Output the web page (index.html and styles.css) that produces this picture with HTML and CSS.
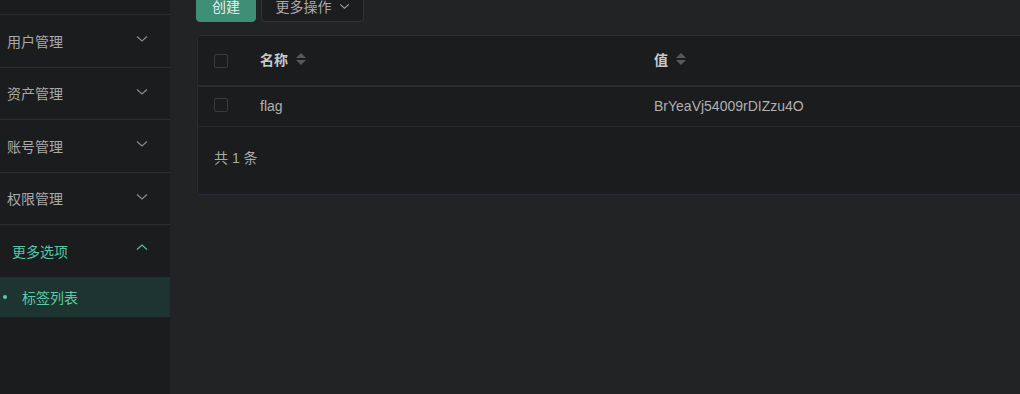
FILE: index.html
```html
<!DOCTYPE html>
<html lang="zh-CN">
<head>
<meta charset="utf-8">
<title>标签列表</title>
<link rel="stylesheet" href="styles.css">
</head>
<body>
<div class="layout">
  <aside class="sider">
    <div class="menu-top"></div>
    <div class="menu-item">
      <span>用户管理</span>
      <svg class="chev" viewBox="0 0 12 8" width="12" height="8"><path d="M1 1.5 L6 6 L11 1.5" fill="none" stroke="currentColor" stroke-width="1.2"/></svg>
    </div>
    <div class="menu-item">
      <span>资产管理</span>
      <svg class="chev" viewBox="0 0 12 8" width="12" height="8"><path d="M1 1.5 L6 6 L11 1.5" fill="none" stroke="currentColor" stroke-width="1.2"/></svg>
    </div>
    <div class="menu-item">
      <span>账号管理</span>
      <svg class="chev" viewBox="0 0 12 8" width="12" height="8"><path d="M1 1.5 L6 6 L11 1.5" fill="none" stroke="currentColor" stroke-width="1.2"/></svg>
    </div>
    <div class="menu-item">
      <span>权限管理</span>
      <svg class="chev" viewBox="0 0 12 8" width="12" height="8"><path d="M1 1.5 L6 6 L11 1.5" fill="none" stroke="currentColor" stroke-width="1.2"/></svg>
    </div>
    <div class="menu-item open">
      <span class="open-title">更多选项</span>
      <svg class="chev up" viewBox="0 0 12 8" width="12" height="8"><path d="M1 6.5 L6 2 L11 6.5" fill="none" stroke="currentColor" stroke-width="1.2"/></svg>
    </div>
    <div class="sub-item active">
      <span class="dot"></span>
      <span>标签列表</span>
    </div>
  </aside>
  <main class="content">
    <div class="toolbar">
      <button class="btn btn-primary">创建</button>
      <button class="btn btn-default">更多操作
        <svg class="btn-chev" viewBox="0 0 12 8" width="11" height="7"><path d="M1 1.5 L6 6 L11 1.5" fill="none" stroke="currentColor" stroke-width="1.2"/></svg>
      </button>
    </div>
    <div class="card">
      <div class="row head">
        <div class="cell cb"><span class="checkbox"></span></div>
        <div class="cell th">名称
          <span class="sorter"><i class="tri-up"></i><i class="tri-down"></i></span>
        </div>
        <div class="cell th">值
          <span class="sorter"><i class="tri-up"></i><i class="tri-down"></i></span>
        </div>
      </div>
      <div class="row body">
        <div class="cell cb"><span class="checkbox"></span></div>
        <div class="cell td">flag</div>
        <div class="cell td">BrYeaVj54009rDIZzu4O</div>
      </div>
      <div class="footer">共 1 条</div>
    </div>
  </main>
</div>
</body>
</html>
```
FILE: styles.css
```css
* { box-sizing: border-box; }
html, body {
  margin: 0;
  padding: 0;
  height: 100%;
  overflow: hidden;
  background: #222325;
  font-family: "Liberation Sans", Arial, "Noto Sans CJK SC", sans-serif;
  font-size: 14px;
}
.layout {
  display: flex;
  height: 394px;
}
.sider {
  width: 170px;
  flex: none;
  background: #1b1c1e;
  display: flex;
  flex-direction: column;
}
.menu-top {
  height: 15px;
  border-bottom: 1px solid #2c2d30;
  flex: none;
}
.menu-item {
  height: 52.5px;
  flex: none;
  display: flex;
  align-items: center;
  justify-content: space-between;
  padding: 0 22px 0 7px;
  color: #a9a9a9;
  border-bottom: 1px solid #2c2d30;
}
.menu-item span { line-height: 20px; padding-top: 2px; }
.chev { color: #8a8a8a; margin-top: -3px; }
.menu-item.open { border-bottom: none; }
.open-title { color: #54c8a2; padding-left: 5px; }
.chev.up { color: #4fc4a0; margin-top: -8px; }
.sub-item {
  height: 40px;
  flex: none;
  display: flex;
  align-items: center;
  background: #1d3430;
  color: #5ccaa4;
  padding-left: 3px;
  margin-top: -1px;
}
.dot {
  width: 4px;
  height: 4px;
  border-radius: 50%;
  background: #5ccaa4;
  margin-right: 15px;
}
.content {
  flex: 1;
  min-width: 0;
  padding-left: 26px;
  margin-top: -10px;
}
.toolbar {
  display: flex;
  gap: 5px;
  height: 32px;
}
.btn {
  height: 32px;
  font-family: inherit;
  font-size: 14px;
  border-radius: 4px;
  padding: 0;
  white-space: nowrap;
  cursor: pointer;
}
.btn-primary {
  width: 60px;
  background: #3f8e76;
  border: 1px solid #3f8e76;
  color: #e3f1ec;
  text-align: center;
}
.btn-default {
  width: 103px;
  background: #1c1d1f;
  border: 1px solid #333437;
  color: #a9a9a9;
  display: flex;
  align-items: center;
  justify-content: center;
  gap: 7px;
}
.btn-chev { color: #a0a0a0; }
.card {
  margin-top: 13px;
  margin-left: 1px;
  background: #1b1c1e;
  border: 1px solid #262a3b;
  border-right: none;
  border-radius: 3px 0 0 3px;
}
.row {
  display: grid;
  grid-template-columns: 46px 394px 1fr;
}
.row.head {
  height: 51px;
  border-bottom: 2px solid #2b2c2f;
}
.row.body {
  height: 40px;
  border-bottom: 1px solid #28292c;
}
.cell {
  display: flex;
  align-items: center;
  padding-left: 16px;
}
.row.head .cell { padding-bottom: 3px; }
.row.head .cell.cb { padding-bottom: 0; }
.th {
  color: #c9c9c9;
  font-weight: bold;
  gap: 8px;
}
.td {
  color: #b0b0b0;
}
.row.body .cell { padding-bottom: 1px; }
.row.body .cell.cb { padding-bottom: 3px; }
.checkbox {
  width: 14px;
  height: 14px;
  border: 1px solid #3a3b3f;
  border-radius: 2px;
  background: #1b1c1e;
}
.sorter {
  display: flex;
  flex-direction: column;
  gap: 2px;
}
.tri-up, .tri-down {
  display: block;
  width: 0;
  height: 0;
  border-left: 5px solid transparent;
  border-right: 5px solid transparent;
}
.tri-up { border-bottom: 5px solid #58595c; }
.tri-down { border-top: 5px solid #58595c; }
.footer {
  height: 67px;
  padding: 21px 0 0 16px;
  line-height: 20px;
  color: #a9a9a9;
}
```
